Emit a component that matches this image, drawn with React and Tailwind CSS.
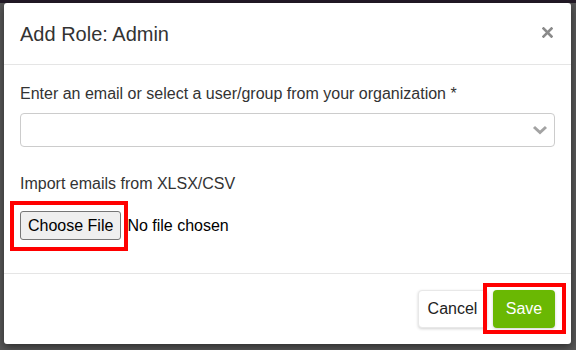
import React from 'react';

function CloseIcon() {
    return (
        <svg width="11" height="11" viewBox="0 0 11 11" className="block">
            <path d="M1.5 1.5 L9.5 9.5 M9.5 1.5 L1.5 9.5" stroke="#8a8a8a" strokeWidth="2.6" strokeLinecap="square" />
        </svg>
    );
}

function Chevron() {
    return (
        <svg width="16" height="10" viewBox="0 0 16 10" className="block">
            <path d="M2 2 L8 7.5 L14 2" fill="none" stroke="#a3a3a3" strokeWidth="3" strokeLinejoin="miter" />
        </svg>
    );
}

export default function App() {
    return (
        <div className="relative w-[576px] h-[350px] overflow-hidden bg-[#585858] font-['Liberation_Sans',Arial,sans-serif]">
            {/* dimmed page behind the modal */}
            <div className="h-[3px] bg-[#231a27]" />

            <div className="flex">
                <div className="w-[4px]" />
                {/* Modal */}
                <div className="w-[567px] h-[341px] bg-white rounded-[3px] shadow-[0_3px_9px_rgba(0,0,0,0.5)] flex flex-col">
                    <div className="h-[62px] px-4 flex items-center justify-between border-b border-[#e5e5e5]">
                        <h4 className="text-[20px] leading-[24px] text-[#333] pt-[1px]">Add Role: Admin</h4>
                        <button className="mr-[2px] mb-[2px]">
                            <CloseIcon />
                        </button>
                    </div>

                    <div className="flex-1 px-4 pt-[17px] text-[#333]">
                        <label className="block text-[16px] leading-[24px]">
                            Enter an email or select a user/group from your organization *
                        </label>
                        <div className="mt-[7px] h-[34px] border border-[#ccc] rounded-[4px] flex items-center justify-end pr-[6px]">
                            <Chevron />
                        </div>

                        <div className="mt-[25px] text-[16px] leading-[24px]">Import emails from XLSX/CSV</div>
                        <div className="mt-[15px] flex items-center text-[16px]">
                            <button className="h-[29px] px-[7px] bg-[#efefef] border border-[#767676] rounded-[3px] text-black leading-none">
                                Choose File
                            </button>
                            <span className="ml-[6px] text-black">No file chosen</span>
                        </div>
                    </div>

                    <div className="h-[71px] border-t border-[#e5e5e5] flex items-center justify-end gap-[6px] px-4 pb-[1px]">
                        <button className="h-[38px] w-[69px] bg-white border border-[#e8e8e8] rounded-[4px] shadow-[0_1px_3px_rgba(0,0,0,0.18)] text-[16px] text-[#222]">
                            Cancel
                        </button>
                        <button className="h-[38px] w-[62px] bg-[#6ab803] rounded-[4px] shadow-[0_1px_3px_rgba(0,0,0,0.18)] text-[16px] text-white">
                            Save
                        </button>
                    </div>
                </div>
            </div>

            {/* red annotation boxes */}
            <div className="absolute left-[10px] top-[201px] w-[118px] h-[50px] border-[4px] border-[#ff0000]" />
            <div className="absolute left-[483px] top-[283px] w-[83px] h-[51px] border-[4px] border-[#ff0000]" />
        </div>
    );
}
